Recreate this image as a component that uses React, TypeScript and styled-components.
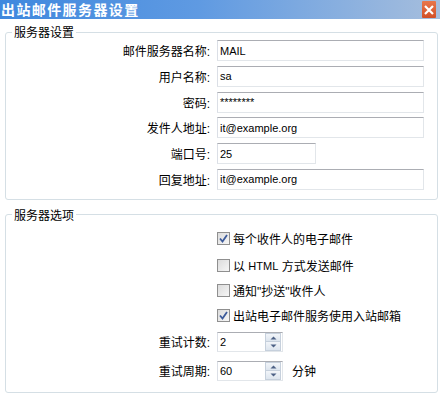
import React from 'react';
import styled, { createGlobalStyle } from 'styled-components';

const GlobalStyle = createGlobalStyle`
  body {
    margin: 0;
    background: #ffffff;
    font-family: "Liberation Sans", "Noto Sans CJK SC", sans-serif;
    font-size: 12px;
    color: #000;
  }
`;

const Window = styled.div`
  width: 440px;
  height: 398px;
  background: #ffffff;
  display: flex;
  flex-direction: column;
  overflow: hidden;
`;

const TitleBar = styled.div`
  height: 19px;
  display: flex;
  align-items: center;
  justify-content: space-between;
  background: linear-gradient(to right, #3f88de 0%, #5f9ae2 45%, #a6bedd 100%);
  padding-left: 1px;
`;

const Title = styled.div`
  color: #ffffff;
  font-family: "Noto Sans CJK SC", sans-serif;
  font-weight: 700;
  font-size: 14px;
  letter-spacing: 1.4px;
  line-height: 19px;
`;

const CloseButton = styled.div`
  width: 14px;
  height: 17px;
  margin-right: 4px;
  display: flex;
  align-items: center;
  justify-content: center;
  background: linear-gradient(to bottom, #e8774c, #d24f27);
  border-radius: 1px;
`;

const Group = styled.fieldset<{ $gap: number }>`
  margin: ${({ $gap }) => $gap}px 2px 0 5px;
  padding: 0;
  border: 1px solid #d5dfe5;
  border-radius: 3px;
  min-width: 0;
`;

const Legend = styled.legend`
  margin-left: 6px;
  padding: 0 2px;
  font-family: "Noto Sans CJK SC", sans-serif;
  font-size: 12px;
  line-height: 14px;
`;

const FormRows = styled.div`
  display: flex;
  flex-direction: column;
  gap: 4.8px;
  padding: 1px 0 9px 0;
`;

const Row = styled.div`
  display: flex;
  align-items: center;
`;

const Label = styled.div`
  width: 204px;
  text-align: right;
  margin-right: 7px;
  font-family: "Liberation Sans", "Noto Sans CJK SC", sans-serif;
  font-size: 12px;
  white-space: nowrap;
`;

const TextBox = styled.div<{ $width: number }>`
  box-sizing: border-box;
  width: ${({ $width }) => $width}px;
  height: 21px;
  border: 1px solid #e2e6ea;
  border-top-color: #abadb3;
  border-left-color: #dbdfe6;
  display: flex;
  align-items: center;
  padding-left: 2px;
  font-family: "Liberation Sans", "DejaVu Sans", sans-serif;
  font-size: 11px;
  background: #fff;
`;

const Options = styled.div`
  display: flex;
  flex-direction: column;
  padding: 7px 0 11px 0;
`;

const CheckRow = styled.div<{ $after: number }>`
  display: flex;
  align-items: center;
  height: 20px;
  padding-left: 211px;
  margin-bottom: ${({ $after }) => $after}px;
  font-family: "Liberation Sans", "Noto Sans CJK SC", sans-serif;
  font-size: 12px;
  white-space: pre;
`;

const Latin = styled.span`
  font-size: 11px;
`;

const Box = styled.span`
  box-sizing: border-box;
  width: 13px;
  height: 13px;
  border: 1px solid #8f8f8f;
  background: linear-gradient(135deg, #dcdcdc, #f6f6f6);
  margin-right: 3px;
  display: flex;
  align-items: center;
  justify-content: center;
`;

const SpinRow = styled(Row)<{ $after: number }>`
  height: 20px;
  margin-bottom: ${({ $after }) => $after}px;
`;

const SpinBox = styled.div`
  box-sizing: border-box;
  width: 66px;
  height: 20px;
  border: 1px solid #e2e6ea;
  border-top-color: #abadb3;
  border-left-color: #dbdfe6;
  display: flex;
  align-items: center;
  justify-content: space-between;
  padding-left: 2px;
  font-family: "Liberation Sans", "DejaVu Sans", sans-serif;
  font-size: 11px;
`;

const SpinButtons = styled.div`
  width: 16px;
  height: 18px;
  display: flex;
  flex-direction: column;
  margin-right: 1px;
`;

const SpinHalf = styled.div`
  flex: 1;
  box-sizing: border-box;
  border: 1px solid #c6d0dc;
  background: linear-gradient(to bottom, #f2f5f9, #dde5ee);
  display: flex;
  align-items: center;
  justify-content: center;
  & + & {
    border-top: none;
  }
`;

const Unit = styled.span`
  margin-left: 9px;
  font-family: "Noto Sans CJK SC", sans-serif;
  font-size: 12px;
`;

const Check = () => (
  <svg width="9" height="9" viewBox="0 0 9 9">
    <path d="M1 4.5 L3.5 7.5 L8 1" stroke="#3c5a9a" strokeWidth="1.8" fill="none" />
  </svg>
);

const Arrow = ({ up }: { up?: boolean }) => (
  <svg width="7" height="4" viewBox="0 0 7 4">
    <path d={up ? 'M0.5 3.5 L3.5 0.5 L6.5 3.5 Z' : 'M0.5 0.5 L3.5 3.5 L6.5 0.5 Z'} fill="#4d6185" />
  </svg>
);

const Spinner = ({ value }: { value: string }) => (
  <SpinBox>
    {value}
    <SpinButtons>
      <SpinHalf><Arrow up /></SpinHalf>
      <SpinHalf><Arrow /></SpinHalf>
    </SpinButtons>
  </SpinBox>
);

const fields = [
  { label: '邮件服务器名称:', value: 'MAIL', width: 207 },
  { label: '用户名称:', value: 'sa', width: 207 },
  { label: '密码:', value: '********', width: 207 },
  { label: '发件人地址:', value: 'it@example.org', width: 207 },
  { label: '端口号:', value: '25', width: 99 },
  { label: '回复地址:', value: 'it@example.org', width: 207 },
];

const options: { text: React.ReactNode; key: string; checked: boolean; after: number }[] = [
  { key: 'each', text: '每个收件人的电子邮件', checked: true, after: 7 },
  { key: 'html', text: <>以 <Latin>HTML</Latin> 方式发送邮件</>, checked: false, after: 5 },
  { key: 'cc', text: '通知"抄送"收件人', checked: false, after: 5 },
  { key: 'inbox', text: '出站电子邮件服务使用入站邮箱', checked: true, after: 6 },
];

const App: React.FC = () => {
  return (
    <>
      <GlobalStyle />
      <Window>
        <TitleBar>
          <Title>出站邮件服务器设置</Title>
          <CloseButton>
            <svg width="10" height="10" viewBox="0 0 10 10">
              <path d="M1 1 L9 9 M9 1 L1 9" stroke="#fff" strokeWidth="2.2" />
            </svg>
          </CloseButton>
        </TitleBar>

        <Group $gap={6}>
          <Legend>服务器设置</Legend>
          <FormRows>
            {fields.map((f) => (
              <Row key={f.label}>
                <Label>{f.label}</Label>
                <TextBox $width={f.width}>{f.value}</TextBox>
              </Row>
            ))}
          </FormRows>
        </Group>

        <Group $gap={8}>
          <Legend>服务器选项</Legend>
          <Options>
            {options.map((o) => (
              <CheckRow key={o.key} $after={o.after}>
                <Box>{o.checked && <Check />}</Box>
                {o.text}
              </CheckRow>
            ))}
            <SpinRow $after={9}>
              <Label>重试计数:</Label>
              <Spinner value="2" />
            </SpinRow>
            <SpinRow $after={0}>
              <Label>重试周期:</Label>
              <Spinner value="60" />
              <Unit>分钟</Unit>
            </SpinRow>
          </Options>
        </Group>
      </Window>
    </>
  );
};

export default App;
